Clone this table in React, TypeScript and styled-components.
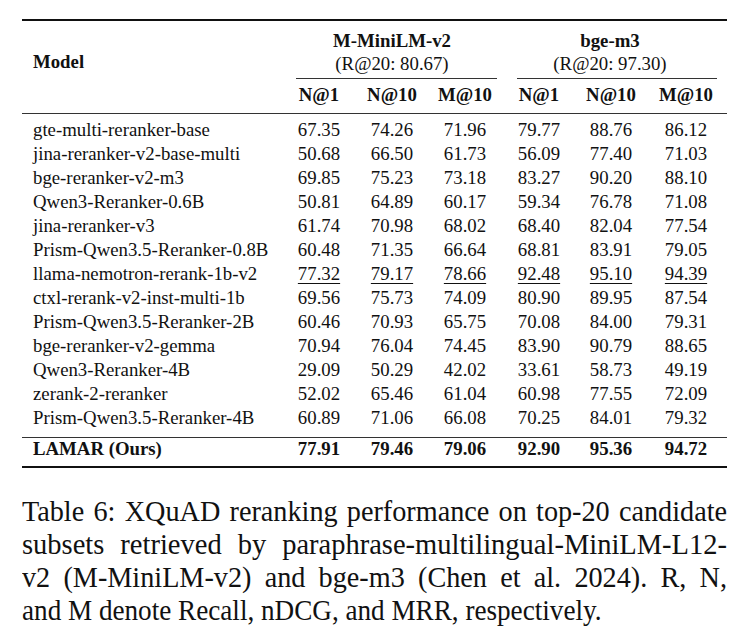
import styled, { createGlobalStyle } from "styled-components"

const GlobalStyle = createGlobalStyle`
  html, body {
    margin: 0;
    padding: 0;
    background: #fff;
    overflow: hidden;
  }
  body {
    font-family: "Liberation Serif", "Times New Roman", serif;
    color: #111;
  }
`

// column widths of the table grid (first one holds the model names)
const COLS = "261px 72px 74px 72px 76px 68px 82px"

const Page = styled.div`
  width: 705px;
  padding: 19px 0 0 22px;
`

const Table = styled.div`
  width: 705px;
  border-top: 2px solid #111;
  border-bottom: 2px solid #111;
  font-size: 18.8px;
`

const Head = styled.div`
  display: grid;
  grid-template-columns: ${COLS};
  padding: 7.5px 0 6px;
  border-bottom: 1px solid #333;
`

const ModelHead = styled.div`
  grid-column: 1;
  grid-row: 1;
  padding: 21.5px 0 0 11px;
  font-weight: bold;
  line-height: 23px;
`

const Group = styled.div<{ $col: number }>`
  grid-column: ${(p) => p.$col} / span 3;
  grid-row: 1;
  display: flex;
  flex-direction: column;
  text-align: center;
  line-height: 23px;
`

const GroupName = styled.div<{ $shift: number }>`
  font-weight: bold;
  padding-right: ${(p) => p.$shift}px;
`

const GroupSub = styled.div<{ $shift: number }>`
  padding-right: ${(p) => p.$shift}px;
`

const CRule = styled.div<{ $l: number; $r: number }>`
  height: 1px;
  background: #333;
  margin: 3.5px ${(p) => p.$r}px 0 ${(p) => p.$l}px;
`

const SubHead = styled.div<{ $col: number }>`
  grid-column: ${(p) => p.$col};
  grid-row: 2;
  margin-top: 4px;
  text-align: center;
  font-weight: bold;
  line-height: 24px;
`

const Body = styled.div`
  padding: 4px 0 7px;
  border-bottom: 1px solid #333;
`

const Final = styled.div`
  padding-bottom: 6px;
`

const Row = styled.div<{ $bold?: boolean; $h: number }>`
  display: grid;
  grid-template-columns: ${COLS};
  line-height: ${(p) => p.$h}px;
  font-weight: ${(p) => (p.$bold ? "bold" : "normal")};
`

const NameCell = styled.div`
  padding-left: 11px;
  white-space: nowrap;
`

const NumCell = styled.div<{ $u?: boolean }>`
  text-align: center;
  text-decoration: ${(p) => (p.$u ? "underline" : "none")};
  text-decoration-thickness: 1px;
  text-underline-offset: 3px;
`

const CaptionBox = styled.div`
  width: 705px;
  margin-top: 25.5px;
  font-size: 30px;
  line-height: 33px;
`

// each caption line is set at its own horizontal squeeze, like the source's
// font expansion, then spread to the full measure
const CaptionLine = styled.div<{ $last?: boolean; $scale: number }>`
  width: ${(p) => 705 / p.$scale}px;
  transform: scaleX(${(p) => p.$scale});
  transform-origin: left top;
  white-space: nowrap;
  text-align: ${(p) => (p.$last ? "left" : "justify")};
  text-align-last: ${(p) => (p.$last ? "left" : "justify")};
`

const rows: [string, string[], boolean?][] = [
  ["gte-multi-reranker-base", ["67.35", "74.26", "71.96", "79.77", "88.76", "86.12"]],
  ["jina-reranker-v2-base-multi", ["50.68", "66.50", "61.73", "56.09", "77.40", "71.03"]],
  ["bge-reranker-v2-m3", ["69.85", "75.23", "73.18", "83.27", "90.20", "88.10"]],
  ["Qwen3-Reranker-0.6B", ["50.81", "64.89", "60.17", "59.34", "76.78", "71.08"]],
  ["jina-reranker-v3", ["61.74", "70.98", "68.02", "68.40", "82.04", "77.54"]],
  ["Prism-Qwen3.5-Reranker-0.8B", ["60.48", "71.35", "66.64", "68.81", "83.91", "79.05"]],
  ["llama-nemotron-rerank-1b-v2", ["77.32", "79.17", "78.66", "92.48", "95.10", "94.39"], true],
  ["ctxl-rerank-v2-inst-multi-1b", ["69.56", "75.73", "74.09", "80.90", "89.95", "87.54"]],
  ["Prism-Qwen3.5-Reranker-2B", ["60.46", "70.93", "65.75", "70.08", "84.00", "79.31"]],
  ["bge-reranker-v2-gemma", ["70.94", "76.04", "74.45", "83.90", "90.79", "88.65"]],
  ["Qwen3-Reranker-4B", ["29.09", "50.29", "42.02", "33.61", "58.73", "49.19"]],
  ["zerank-2-reranker", ["52.02", "65.46", "61.04", "60.98", "77.55", "72.09"]],
  ["Prism-Qwen3.5-Reranker-4B", ["60.89", "71.06", "66.08", "70.25", "84.01", "79.32"]],
]

const ours = ["77.91", "79.46", "79.06", "92.90", "95.36", "94.72"]
const metrics = ["N@1", "N@10", "M@10", "N@1", "N@10", "M@10"]

const caption: [string, number][] = [
  ["Table 6: XQuAD reranking performance on top-20 candidate", 0.94],
  ["subsets retrieved by paraphrase-multilingual-MiniLM-L12-", 0.95],
  ["v2 (M-MiniLM-v2) and bge-m3 (Chen et al. 2024). R, N,", 0.94],
  ["and M denote Recall, nDCG, and MRR, respectively.", 0.905],
]

const App = () => {
  return (
    <Page>
      <GlobalStyle />
      <Table>
        <Head>
          <ModelHead>Model</ModelHead>
          <Group $col={2}>
            <GroupName $shift={0}>M-MiniLM-v2</GroupName>
            <GroupSub $shift={0}>(R@20: 80.67)</GroupSub>
            <CRule $l={13} $r={4} />
          </Group>
          <Group $col={5}>
            <GroupName $shift={8}>bge-m3</GroupName>
            <GroupSub $shift={8}>(R@20: 97.30)</GroupSub>
            <CRule $l={16} $r={10} />
          </Group>
          {metrics.map((m, i) => (
            <SubHead key={i} $col={i + 2}>
              {m}
            </SubHead>
          ))}
        </Head>
        <Body>
          {rows.map(([name, vals, underline]) => (
            <Row key={name} $h={24}>
              <NameCell>{name}</NameCell>
              {vals.map((v, i) => (
                <NumCell key={i} $u={underline}>
                  {v}
                </NumCell>
              ))}
            </Row>
          ))}
        </Body>
        <Final>
          <Row $bold $h={22}>
            <NameCell>LAMAR (Ours)</NameCell>
            {ours.map((v, i) => (
              <NumCell key={i}>{v}</NumCell>
            ))}
          </Row>
        </Final>
      </Table>
      <CaptionBox>
        {caption.map(([line, scale], i) => (
          <CaptionLine key={i} $scale={scale} $last={i === caption.length - 1}>
            {line}
          </CaptionLine>
        ))}
      </CaptionBox>
    </Page>
  )
}

export default App
